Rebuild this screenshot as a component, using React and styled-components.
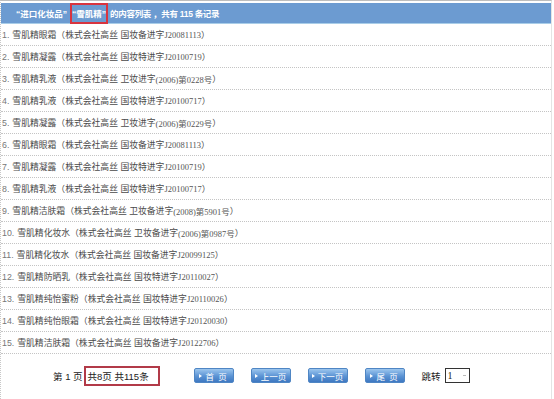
import React from "react";
import styled, { createGlobalStyle } from "styled-components";

const GlobalStyle = createGlobalStyle`
  html, body {
    margin: 0;
    padding: 0;
    background: #fff;
  }
  body {
    font-family: "Liberation Sans", "Noto Sans CJK SC", sans-serif;
  }
`;

const Page = styled.div`
  width: 552px;
  height: 399px;
  border-top: 1px solid #bdbdbd;
  border-right: 1px solid #e4e4e4;
  border-left: 1px dotted #c8c8c8;
  box-sizing: border-box;
  padding-top: 2px;
  display: flex;
  flex-direction: column;
`;

const Header = styled.div`
  height: 20px;
  background: #6c9bd1;
  border-bottom: 1px solid #a9cde8;
  display: flex;
  align-items: center;
  padding-left: 15px;
  color: #fff;
  font-size: 8.5px;
  font-weight: bold;
  white-space: pre;
`;

const Mark = styled.span`
  display: inline-flex;
  align-items: center;
  height: 21px;
  padding: 0;
  border: 2px solid #d8343f;
  box-sizing: border-box;
  margin: 0 2px 0 3px;
`;

const Tail = styled.span`
  letter-spacing: -0.3px;
`;

const List = styled.div`
  display: flex;
  flex-direction: column;
`;

const Row = styled.div`
  height: 22px;
  box-sizing: border-box;
  border-bottom: 1px dotted #c4c4c4;
  display: flex;
  align-items: center;
  padding-left: 1px;
  font-size: 8.8px;
  color: #4a4a4a;
  white-space: nowrap;
`;

const Num = styled.span`
  color: #777;
  margin-right: 3px;
`;

const Code = styled.span`
  font-family: "Liberation Serif", "Noto Sans CJK SC", serif;
  font-size: 8.5px;
  color: #555;
`;

const Footer = styled.div`
  flex: 1;
  display: flex;
  align-items: center;
  padding-left: 52px;
  padding-bottom: 2px;
  font-size: 9.5px;
  color: #222;
  white-space: nowrap;
`;

const PageBox = styled.span`
  display: inline-flex;
  align-items: center;
  height: 20px;
  width: 76px;
  box-sizing: border-box;
  border: 2px solid #b23a48;
  padding-left: 2px;
  margin-left: 1px;
`;

const Buttons = styled.div`
  display: flex;
  gap: 17px;
  margin-left: 34px;
`;

const NavButton = styled.span`
  width: 40px;
  height: 15px;
  box-sizing: border-box;
  border: 1px solid #4f86c4;
  border-radius: 2px;
  background: linear-gradient(#9cc6ee, #5b93d4 55%, #3e78c1);
  color: #fff;
  font-size: 8.5px;
  display: flex;
  align-items: center;
  justify-content: center;
  gap: 2px;
  letter-spacing: ${(p) => (p.spaced ? "1px" : "0")};
`;

const Tri = styled.span`
  width: 0;
  height: 0;
  border-top: 2.5px solid transparent;
  border-bottom: 2.5px solid transparent;
  border-left: 3px solid #fff;
  margin-right: 1px;
`;

const Jump = styled.span`
  margin-left: 17px;
  font-size: 9.5px;
`;

const PageInput = styled.span`
  margin-left: 4px;
  width: 25px;
  height: 15px;
  box-sizing: border-box;
  border: 1px solid #333;
  display: flex;
  align-items: center;
  justify-content: space-between;
  padding: 0 3px 0 2px;
  font-family: "Liberation Serif", serif;
  font-size: 10px;
  color: #222;
`;

const Caret = styled.span`
  width: 3px;
  height: 1px;
  background: #bbb;
`;

const rows = [
  ["雪肌精眼霜", "国妆备进字", "J20081113"],
  ["雪肌精凝露", "国妆特进字", "J20100719"],
  ["雪肌精乳液", "卫妆进字", "(2006)第0228号"],
  ["雪肌精乳液", "国妆特进字", "J20100717"],
  ["雪肌精凝露", "卫妆进字", "(2006)第0229号"],
  ["雪肌精眼霜", "国妆备进字", "J20081113"],
  ["雪肌精凝露", "国妆特进字", "J20100719"],
  ["雪肌精乳液", "国妆特进字", "J20100717"],
  ["雪肌精洁肤霜", "卫妆备进字", "(2008)第5901号"],
  ["雪肌精化妆水", "卫妆备进字", "(2006)第0987号"],
  ["雪肌精化妆水", "国妆备进字", "J20099125"],
  ["雪肌精防晒乳", "国妆特进字", "J20110027"],
  ["雪肌精纯怡蜜粉", "国妆特进字", "J20110026"],
  ["雪肌精纯怡眼霜", "国妆特进字", "J20120030"],
  ["雪肌精洁肤霜", "国妆备进字", "J20122706"],
];

const navs = [
  { label: "首 页", spaced: true },
  { label: "上一页" },
  { label: "下一页" },
  { label: "尾 页", spaced: true },
];

export default function App() {
  return (
    <>
      <GlobalStyle />
      <Page>
        <Header>
          “进口化妆品”
          <Mark>“雪肌精”</Mark>
          <Tail>{"的内容列表 ，共有 115 条记录"}</Tail>
        </Header>
        <List>
          {rows.map(([name, type, code], i) => (
            <Row key={i}>
              <Num>{i + 1}.</Num>
              {name}（株式会社高丝 {type}
              <Code>{code}</Code>）
            </Row>
          ))}
        </List>
        <Footer>
          第 1 页
          <PageBox>共8页 共115条</PageBox>
          <Buttons>
            {navs.map((n) => (
              <NavButton key={n.label} spaced={n.spaced}>
                <Tri />
                {n.label}
              </NavButton>
            ))}
          </Buttons>
          <Jump>跳转</Jump>
          <PageInput>
            1<Caret />
          </PageInput>
        </Footer>
      </Page>
    </>
  );
}
